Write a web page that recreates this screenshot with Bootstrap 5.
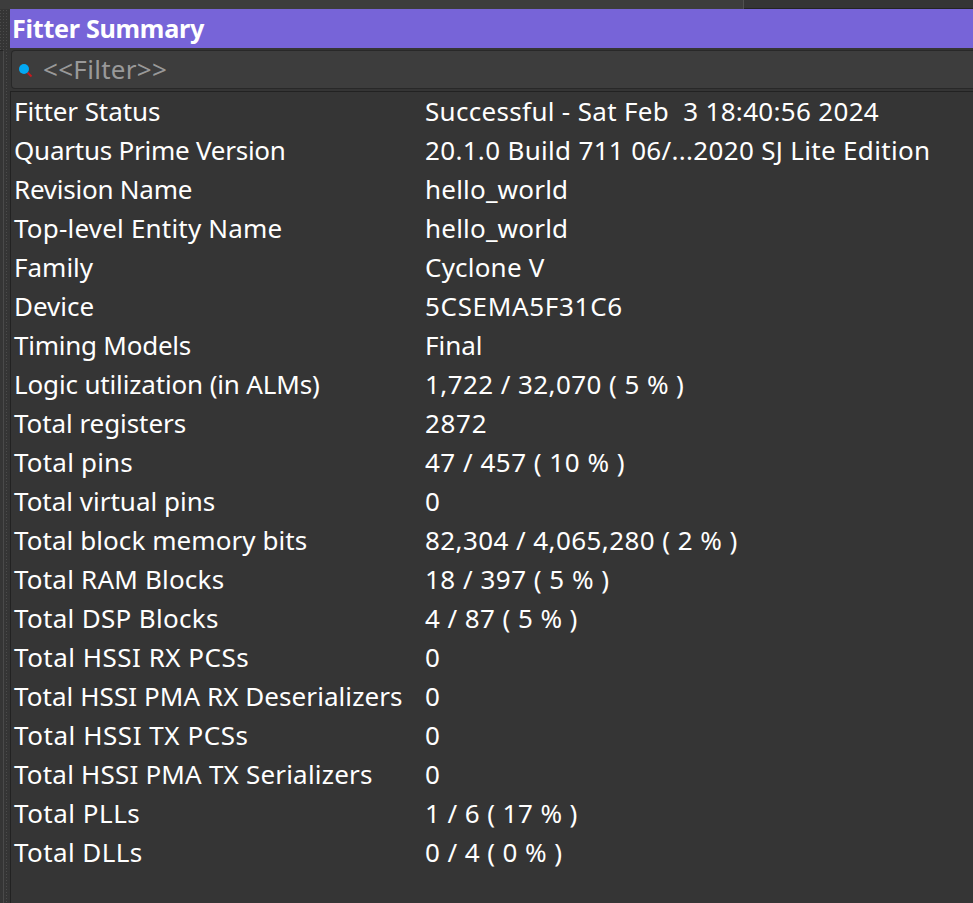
<!DOCTYPE html>
<html lang="en">
<head>
<meta charset="utf-8">
<meta name="viewport" content="width=device-width, initial-scale=1">
<title>Fitter Summary</title>
<link href="https://cdn.jsdelivr.net/npm/bootstrap@5.3.0/dist/css/bootstrap.min.css" rel="stylesheet">
<style>
body{background:#353535;color:#fff;font-family:"Noto Sans",sans-serif;font-size:26px;line-height:39px}
.tabstrip{height:9px;background:#353535;border-bottom:1px solid #242424}
.tab-active{width:744px;height:9px;background:#3d3d3d;border-right:1px solid #505050}
.gutter{width:10px;background:radial-gradient(circle,#4b4b4b 0 .6px,transparent .9px) 5px 0/3px 3px,#353535}
.gutter-left{width:4px;background:#353535;border-right:1px solid #4a4a4a;border-top:1px solid #242424;margin-top:41px}
.gutter-right{width:1px;margin-left:5px;background:#353535}
.title-bar{height:39px;background:#7764d8;padding-left:2px;font-size:25.2px;letter-spacing:-.3px;line-height:38px}
.filter-box{height:39px;margin:2px 0 0 1px;background:#3d3d3d;border:1px solid #282828;border-right:0;border-radius:4px 0 0 4px;color:#999;padding-left:7px;line-height:37px;letter-spacing:.3px}
.filter-box svg{margin:2px 10px 0 0}
.results{margin-top:2px;border-top:1px solid #222;border-left:1px solid #222;padding-left:3px}
.key{width:411px;flex:none}
.line{white-space:pre;height:39px}
/* tracking steps, in hundredths of a pixel */
.tn24{letter-spacing:-.24px}.tn15{letter-spacing:-.15px}.tn07{letter-spacing:-.07px}.tp07{letter-spacing:.07px}
.tp20{letter-spacing:.2px}.tp26{letter-spacing:.26px}.tp32{letter-spacing:.32px}.tp42{letter-spacing:.42px}
.tp50{letter-spacing:.5px}.tp56{letter-spacing:.56px}.tp68{letter-spacing:.68px}
</style>
</head>
<body class="vh-100 overflow-hidden d-flex flex-column">
<div class="tabstrip flex-shrink-0"><div class="tab-active"></div></div>
<div class="d-flex flex-grow-1">
  <div class="gutter d-flex flex-shrink-0"><div class="gutter-left"></div><div class="gutter-right"></div></div>
  <main class="flex-grow-1 d-flex flex-column">
    <div class="title-bar fw-bold"><span>Fitter Summary</span></div>
    <div class="filter-box d-flex align-items-center">
      <svg width="14" height="14" viewBox="0 0 14 14"><path d="M8.5 8.5l4 4" stroke="#c8191e" stroke-width="2"/><circle cx="5" cy="5" r="5" fill="#03a9f4"/></svg><span>&lt;&lt;Filter&gt;&gt;</span>
    </div>
    <div class="results flex-grow-1">
      <div class="line d-flex"><div class="key"><span class="tn07">Fitter Status</span></div><span class="tp32">Successful - Sat Feb  3 18:40:56 2024</span></div>
      <div class="line d-flex"><div class="key"><span class="tn24">Quartus Prime Version</span></div><span class="tp32">20.1.0 Build 711 06/...2020 SJ Lite Edition</span></div>
      <div class="line d-flex"><div class="key"><span class="tn24">Revision Name</span></div><span class="tp20">hello_world</span></div>
      <div class="line d-flex"><div class="key"><span class="tp20">Top-level Entity Name</span></div><span class="tp20">hello_world</span></div>
      <div class="line d-flex"><div class="key"><span>Family</span></div><span class="tp20">Cyclone V</span></div>
      <div class="line d-flex"><div class="key"><span>Device</span></div><span class="tp68">5CSEMA5F31C6</span></div>
      <div class="line d-flex"><div class="key"><span class="tn24">Timing Models</span></div><span>Final</span></div>
      <div class="line d-flex"><div class="key"><span class="tn15">Logic utilization (in ALMs)</span></div><span class="tp42">1,722 / 32,070 ( 5 % )</span></div>
      <div class="line d-flex"><div class="key"><span class="tn07">Total registers</span></div><span class="tp68">2872</span></div>
      <div class="line d-flex"><div class="key"><span class="tp20">Total pins</span></div><span class="tp50">47 / 457 ( 10 % )</span></div>
      <div class="line d-flex"><div class="key"><span>Total virtual pins</span></div><span class="tp50">0</span></div>
      <div class="line d-flex"><div class="key"><span class="tp07">Total block memory bits</span></div><span class="tp42">82,304 / 4,065,280 ( 2 % )</span></div>
      <div class="line d-flex"><div class="key"><span class="tp20">Total RAM Blocks</span></div><span class="tp50">18 / 397 ( 5 % )</span></div>
      <div class="line d-flex"><div class="key"><span class="tp32">Total DSP Blocks</span></div><span class="tp42">4 / 87 ( 5 % )</span></div>
      <div class="line d-flex"><div class="key"><span class="tp50">Total HSSI RX PCSs</span></div><span>0</span></div>
      <div class="line d-flex"><div class="key"><span class="tp07">Total HSSI PMA RX Deserializers</span></div><span>0</span></div>
      <div class="line d-flex"><div class="key"><span class="tp56">Total HSSI TX PCSs</span></div><span>0</span></div>
      <div class="line d-flex"><div class="key"><span class="tp20">Total HSSI PMA TX Serializers</span></div><span>0</span></div>
      <div class="line d-flex"><div class="key"><span class="tp50">Total PLLs</span></div><span class="tp42">1 / 6 ( 17 % )</span></div>
      <div class="line d-flex"><div class="key"><span class="tp42">Total DLLs</span></div><span class="tp42">0 / 4 ( 0 % )</span></div>
    </div>
  </main>
</div>
<script src="https://cdn.jsdelivr.net/npm/bootstrap@5.3.0/dist/js/bootstrap.bundle.min.js"></script>
</body>
</html>
